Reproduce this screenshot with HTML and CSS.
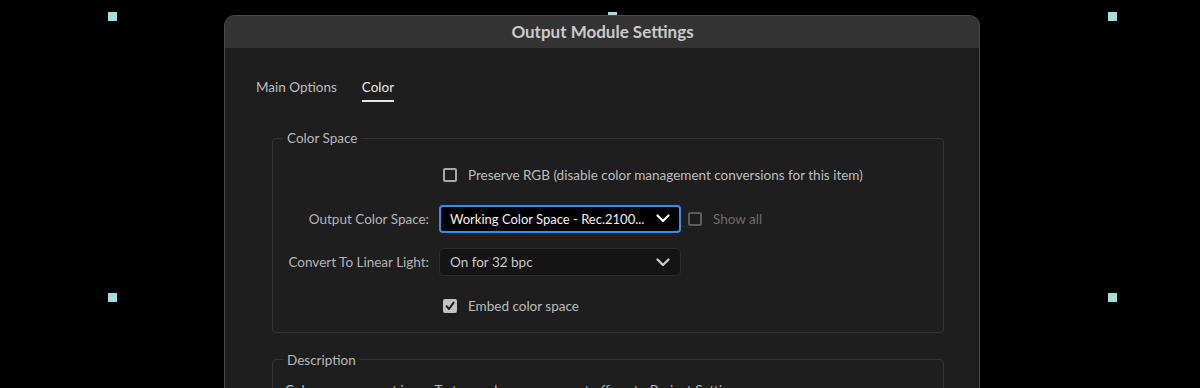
FILE: index.html
```html
<html>

<head>
	<link rel="stylesheet" href="styles.css">
</head>

<body>
	<div id="stage">
		<span class="handle" style="left:108px;top:12px;"></span>
		<span class="handle" style="left:608px;top:12px;"></span>
		<span class="handle" style="left:1108px;top:12px;"></span>
		<span class="handle" style="left:108px;top:293px;"></span>
		<span class="handle" style="left:1108px;top:293px;"></span>

		<div id="dialog">
			<div class="titleBar">Output Module Settings</div>
			<div class="dialogBody">
				<div class="tabs">
					<span class="tab">Main Options</span>
					<span class="tab active">Color</span>
				</div>

				<fieldset class="group">
					<legend>Color Space</legend>
					<div class="grid">
						<span></span>
						<div class="check">
							<span class="box"></span>
							<span>Preserve RGB (disable color management conversions for this item)</span>
						</div>

						<label class="rowLabel">Output Color Space:</label>
						<div class="inline">
							<div class="select focused">
								<span>Working Color Space - Rec.2100...</span>
								<svg width="14" height="9" viewBox="0 0 14 9"><path d="M1.5 1.5 L7 7 L12.5 1.5" fill="none" stroke="#ffffff" stroke-width="2.2" stroke-linecap="round" stroke-linejoin="round" /></svg>
							</div>
							<div class="check dim">
								<span class="box"></span>
								<span>Show all</span>
							</div>
						</div>

						<label class="rowLabel">Convert To Linear Light:</label>
						<div class="inline">
							<div class="select">
								<span>On for 32 bpc</span>
								<svg width="14" height="9" viewBox="0 0 14 9"><path d="M1.5 1.5 L7 7 L12.5 1.5" fill="none" stroke="#d0d0d0" stroke-width="2.2" stroke-linecap="round" stroke-linejoin="round" /></svg>
							</div>
						</div>

						<span></span>
						<div class="check">
							<span class="box checked">
								<svg width="10" height="10" viewBox="0 0 10 10"><path d="M1.5 5.2 L4 8 L8.6 1.6" fill="none" stroke="#1e1e1e" stroke-width="2" stroke-linecap="round" stroke-linejoin="round" /></svg>
							</span>
							<span>Embed color space</span>
						</div>
					</div>
				</fieldset>

				<fieldset class="group description">
					<legend>Description</legend>
					<p>Color management is on. To turn color management off, go to Project Settings.</p>
				</fieldset>
			</div>
		</div>
	</div>
</body>

</html>
```

FILE: styles.css
```css
body {
	margin: 0;
	background: #000000;
	font-family: Lato, "Open Sans", sans-serif;
	font-size: 13.5px;
	color: #b9b9b9;
	overflow: hidden;
}

#stage {
	position: relative;
	width: 1200px;
	height: 388px;
	padding-top: 15px;
	box-sizing: border-box;
	overflow: hidden;
}

.handle {
	position: absolute;
	width: 9px;
	height: 9px;
	background: #a9dcdc;
}

#dialog {
	position: relative;
	margin-left: 224px;
	width: 756px;
	height: 420px;
	box-sizing: border-box;
	border: 1px solid #4a4a4a;
	border-bottom: none;
	border-radius: 11px 11px 0 0;
	background: #1e1e1e;
	overflow: hidden;
}

.titleBar {
	height: 32px;
	line-height: 31px;
	background: #333333;
	color: #cacaca;
	font-weight: bold;
	font-size: 17px;
	text-align: center;
	padding-left: 1px;
}

.dialogBody {
	padding: 27px 35px 0 47px;
}

.tabs {
	display: flex;
	gap: 25px;
	margin-left: -16px;
	height: 30px;
}

.tab {
	color: #bdbdbd;
	line-height: 24px;
	height: 28px;
	white-space: nowrap;
}

.tab.active {
	color: #e8e8e8;
	border-bottom: 2px solid #e6e6e6;
	height: 25px;
}

fieldset.group {
	margin: 0;
	border: 1px solid #333333;
	border-radius: 4px;
	padding: 0 0 12px 0;
	margin-top: 24px;
}

fieldset.group legend {
	margin-left: 10px;
	padding: 0 4px;
	color: #b9b9b9;
	line-height: 18px;
}

.grid {
	display: grid;
	grid-template-columns: 156px auto;
	grid-auto-rows: 28px;
	column-gap: 10px;
	row-gap: 15.5px;
	align-items: center;
	margin-top: 14px;
}

.rowLabel {
	text-align: right;
	color: #b4b4b4;
	white-space: nowrap;
}

.inline {
	display: flex;
	align-items: center;
	gap: 7px;
}

.check {
	display: flex;
	align-items: center;
	gap: 11px;
	margin-left: 4px;
	height: 20px;
	color: #bdbdbd;
	white-space: nowrap;
}

.check.dim {
	color: #6d6d6d;
	margin-left: 0;
}

.box {
	width: 14px;
	height: 14px;
	box-sizing: border-box;
	border: 2px solid #a8a8a8;
	border-radius: 2px;
	display: flex;
	align-items: center;
	justify-content: center;
	flex: none;
}

.check.dim .box {
	border-color: #5c5c5c;
}

.box.checked {
	background: #c2c2c2;
	border-color: #c2c2c2;
}

.select {
	width: 242px;
	height: 28px;
	box-sizing: border-box;
	border: 1px solid #2c2c2c;
	border-radius: 4px;
	background: #141414;
	color: #c9c9c9;
	display: flex;
	align-items: center;
	justify-content: space-between;
	padding: 0 10px 0 10px;
	white-space: nowrap;
	flex: none;
}

.select.focused {
	border: 2px solid #3a8ee6;
	background: #000000;
	color: #f2f2f2;
	font-size: 13px;
	padding-left: 9px;
	padding-right: 9px;
}

fieldset.description {
	margin-top: 18px;
	height: 60px;
}

fieldset.description p {
	margin: 13px 0 0 12px;
	color: #b9b9b9;
	white-space: nowrap;
}
```
